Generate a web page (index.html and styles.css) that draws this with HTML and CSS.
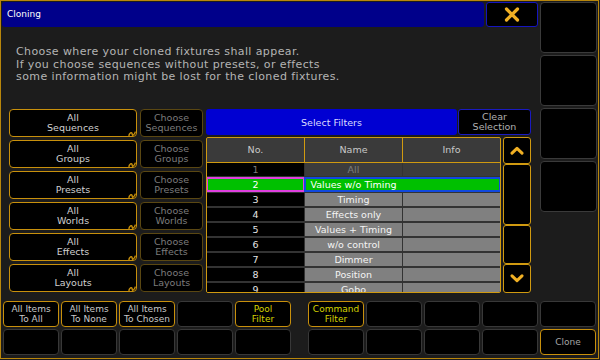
FILE: index.html
```html
<!DOCTYPE html>
<html>
<head>
<meta charset="utf-8">
<link rel="stylesheet" href="styles.css">
</head>
<body>
<div class="screen">
  <div class="top">
    <div class="dialog">
      <div class="titlerow">
        <div class="title">Cloning</div>
        <div class="close">
          <svg width="16" height="15" viewBox="0 0 16 15"><path d="M2.5 2 L13.5 13 M13.5 2 L2.5 13" stroke="#f0b024" stroke-width="3.2" stroke-linecap="round" fill="none"/></svg>
        </div>
      </div>
      <p class="msg">Choose where your cloned fixtures shall appear.<br>If you choose sequences without presets, or effects<br>some information might be lost for the cloned fixtures.</p>
      <div class="content">
        <div class="choices">
          <div class="btn all">All<br>Sequences<svg class="curl" viewBox="0 0 8 8"><path d="M0.8 8 C0.8 3.5 4.2 2.6 4.2 5.2 C4.2 7 6.2 6.4 7.4 2.6" stroke="#c8900c" stroke-width="1.4" fill="none"/></svg></div>
          <div class="btn choose">Choose<br>Sequences</div>
          <div class="btn all">All<br>Groups<svg class="curl" viewBox="0 0 8 8"><path d="M0.8 8 C0.8 3.5 4.2 2.6 4.2 5.2 C4.2 7 6.2 6.4 7.4 2.6" stroke="#c8900c" stroke-width="1.4" fill="none"/></svg></div>
          <div class="btn choose">Choose<br>Groups</div>
          <div class="btn all">All<br>Presets<svg class="curl" viewBox="0 0 8 8"><path d="M0.8 8 C0.8 3.5 4.2 2.6 4.2 5.2 C4.2 7 6.2 6.4 7.4 2.6" stroke="#c8900c" stroke-width="1.4" fill="none"/></svg></div>
          <div class="btn choose">Choose<br>Presets</div>
          <div class="btn all">All<br>Worlds<svg class="curl" viewBox="0 0 8 8"><path d="M0.8 8 C0.8 3.5 4.2 2.6 4.2 5.2 C4.2 7 6.2 6.4 7.4 2.6" stroke="#c8900c" stroke-width="1.4" fill="none"/></svg></div>
          <div class="btn choose">Choose<br>Worlds</div>
          <div class="btn all">All<br>Effects<svg class="curl" viewBox="0 0 8 8"><path d="M0.8 8 C0.8 3.5 4.2 2.6 4.2 5.2 C4.2 7 6.2 6.4 7.4 2.6" stroke="#c8900c" stroke-width="1.4" fill="none"/></svg></div>
          <div class="btn choose">Choose<br>Effects</div>
          <div class="btn all">All<br>Layouts<svg class="curl" viewBox="0 0 8 8"><path d="M0.8 8 C0.8 3.5 4.2 2.6 4.2 5.2 C4.2 7 6.2 6.4 7.4 2.6" stroke="#c8900c" stroke-width="1.4" fill="none"/></svg></div>
          <div class="btn choose">Choose<br>Layouts</div>
        </div>
        <div class="filters">
          <div class="filterbar">
            <div class="selfilters">Select Filters</div>
            <div class="clear">Clear<br>Selection</div>
          </div>
          <div class="tablearea">
            <div class="table">
              <div class="thead"><div>No.</div><div>Name</div><div>Info</div></div>
              <div class="tbody">
                <div class="no dim">1</div><div class="nm dim">All</div><div class="inf dim"></div>
                <div class="no sel">2</div><div class="selwrap"><div>Values w/o Timing</div><div></div></div>
                <div class="no">3</div><div class="nm">Timing</div><div class="inf"></div>
                <div class="no">4</div><div class="nm">Effects only</div><div class="inf"></div>
                <div class="no">5</div><div class="nm">Values + Timing</div><div class="inf"></div>
                <div class="no">6</div><div class="nm">w/o control</div><div class="inf"></div>
                <div class="no">7</div><div class="nm">Dimmer</div><div class="inf"></div>
                <div class="no">8</div><div class="nm">Position</div><div class="inf"></div>
                <div class="no">9</div><div class="nm">Gobo</div><div class="inf"></div>
              </div>
            </div>
            <div class="scroll">
              <div class="sb up"><svg width="14" height="9" viewBox="0 0 14 9"><path d="M2 7.2 L7 2.4 L12 7.2" stroke="#f0b024" stroke-width="3" stroke-linecap="round" stroke-linejoin="round" fill="none"/></svg></div>
              <div class="sb m1"></div>
              <div class="sb m2"></div>
              <div class="sb down"><svg width="14" height="9" viewBox="0 0 14 9"><path d="M2 1.8 L7 6.6 L12 1.8" stroke="#f0b024" stroke-width="3" stroke-linecap="round" stroke-linejoin="round" fill="none"/></svg></div>
            </div>
          </div>
        </div>
      </div>
    </div>
    <div class="side">
      <div class="sbtn"></div>
      <div class="sbtn"></div>
      <div class="sbtn"></div>
      <div class="sbtn"></div>
    </div>
  </div>
  <div class="bottom">
    <div class="group">
      <div class="bb gold">All Items<br>To All</div>
      <div class="bb gold">All Items<br>To None</div>
      <div class="bb gold">All Items<br>To Chosen</div>
      <div class="bb"></div>
      <div class="bb gold yel">Pool<br>Filter</div>
      <div class="bb"></div>
      <div class="bb"></div>
      <div class="bb"></div>
      <div class="bb"></div>
      <div class="bb"></div>
    </div>
    <div class="group">
      <div class="bb gold yel">Command<br>Filter</div>
      <div class="bb"></div>
      <div class="bb"></div>
      <div class="bb"></div>
      <div class="bb"></div>
      <div class="bb"></div>
      <div class="bb"></div>
      <div class="bb"></div>
      <div class="bb"></div>
      <div class="bb gold clone">Clone</div>
    </div>
  </div>
</div>
</body>
</html>
```

FILE: styles.css
```css
* { box-sizing: border-box; margin: 0; padding: 0; }
body { margin: 0; background: #1c1c1c; font-family: "DejaVu Sans", sans-serif; }

.screen {
  width: 599px; height: 359px;
  border: 1px solid #b8860b;
  background: #1c1c1c;
  padding: 1px;
  display: flex; flex-direction: column; gap: 2px;
}
.top { display: flex; height: 297px; gap: 2px; }
.dialog { width: 536px; display: flex; flex-direction: column; }

.titlerow { display: flex; height: 25px; gap: 2px; }
.title {
  flex: 1; background: #00008a; border-radius: 3px;
  color: #fff; font-size: 9px; line-height: 25px; padding-left: 5px;
}
.close {
  width: 52px; background: #000; border: 1px solid #1515c0; border-radius: 3px;
  display: flex; align-items: center; justify-content: center;
}

.msg {
  margin: 19px 0 0 14px; height: 37.5px;
  font-size: 11px; line-height: 12.5px; letter-spacing: 0.4px; color: #b4b4b4;
}

.content { display: flex; gap: 3px; margin: 25.5px 0 0 7px; }
.choices {
  display: grid; grid-template-columns: 128px 63px;
  grid-auto-rows: 28px; gap: 3px; align-content: start;
}
.btn {
  position: relative; background: #000; border-radius: 4px;
  font-size: 9.5px; line-height: 10px; text-align: center;
  display: flex; align-items: center; justify-content: center;
}
.all { border: 1px solid #c8900c; color: #d0d0d0; }
.choose { border: 1px solid #5a4712; color: #7c7c7c; }
.curl { position: absolute; right: 0; bottom: -1px; width: 8px; height: 8px; }

.filters { width: 325px; display: flex; flex-direction: column; gap: 2px; }
.filterbar { display: flex; height: 26px; gap: 1px; }
.selfilters {
  flex: 1; background: #0000d2; border-radius: 3px; color: #dcdcff;
  font-size: 9.5px; display: flex; align-items: center; justify-content: center;
}
.clear {
  width: 73px; background: #000; border: 1px solid #1a1ac0; border-radius: 3px;
  color: #b0b0b0; font-size: 9.5px; line-height: 10.5px; text-align: center;
  display: flex; align-items: center; justify-content: center;
}

.tablearea { display: flex; gap: 2px; height: 156px; }
.table {
  width: 295px; border: 1px solid #d09a10; border-radius: 2px;
  overflow: hidden; background: #333;
}
.thead {
  display: grid; grid-template-columns: 97px 97px 97px; column-gap: 1px;
  background: #d09a10; border-bottom: 1px solid #d09a10; height: 25px;
}
.thead div {
  background: #3a3a3a; color: #c8c8c8; font-size: 9.5px;
  line-height: 24px; text-align: center;
}
.tbody {
  display: grid; grid-template-columns: 97px 97px 97px;
  grid-auto-rows: 13px; column-gap: 1px; row-gap: 2px; background: #333;
}
.tbody > div { font-size: 9.5px; line-height: 13px; text-align: center; }
.no { background: #000; color: #e4e4e4; }
.nm { background: #808080; color: #f4f4f4; }
.inf { background: #808080; }
.no.dim { color: #7a7a7a; }
.nm.dim { background: #3c3c3c; color: #7e7e7e; }
.inf.dim { background: #3c3c3c; }
.no.sel {
  background: #00c000; color: #fff;
  box-shadow: 0 0 0 1px #e040e0, inset 0 0 0 1px #e040e0;
}
.selwrap {
  grid-column: span 2; background: #00c000; color: #fff;
  display: grid; grid-template-columns: 97px 1fr;
  box-shadow: 0 0 0 1px #1048e0, inset 0 0 0 1px #1048e0;
}

.scroll { width: 28px; display: flex; flex-direction: column; }
.sb {
  background: #000; border: 1px solid #d09a10; border-radius: 3px;
  display: flex; align-items: center; justify-content: center;
}
.up { height: 27px; }
.m1 { height: 61px; }
.m2 { height: 39px; }
.down { height: 29px; }

.side { width: 57px; display: flex; flex-direction: column; gap: 2px; }
.sbtn { height: 51px; background: #000; border: 1px solid #3a3a3a; border-radius: 4px; }

.bottom { display: flex; gap: 17px; padding-left: 1px; height: 54px; }
.group {
  display: grid; grid-template-columns: repeat(5, 56px);
  grid-template-rows: 26px 26px; gap: 2px;
}
.bb {
  background: #000; border: 1px solid #383838; border-radius: 4px;
  color: #c8c8c8; font-size: 9px; line-height: 10px; text-align: center;
  display: flex; align-items: center; justify-content: center;
}
.bb.gold { border-color: #c8900c; }
.bb.yel { color: #d4d400; }
.bb.clone { color: #a4a4a4; }
```
